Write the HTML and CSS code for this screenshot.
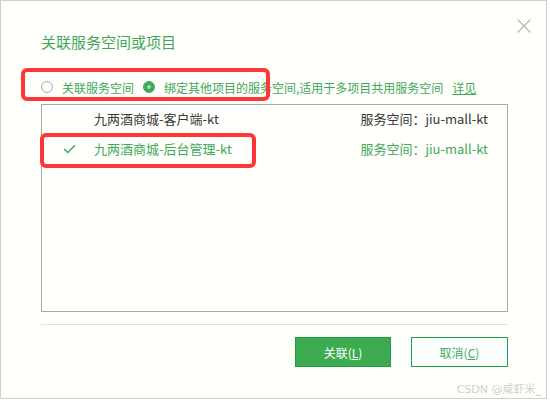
FILE: index.html
```html
<!DOCTYPE html>
<html lang="zh-CN">
<head>
<meta charset="utf-8">
<link rel="stylesheet" href="styles.css">
</head>
<body>
<div class="dialog">
  <button class="close" aria-label="关闭">
    <svg width="14" height="14" viewBox="0 0 14 14"><path d="M0.5 0.5 L13.5 13.5 M13.5 0.5 L0.5 13.5" stroke="#b5b5b5" stroke-width="1.1" fill="none"/></svg>
  </button>
  <h1 class="title">关联服务空间或项目</h1>
  <div class="radios">
    <label class="radio"><span class="dot"></span>关联服务空间</label>
    <label class="radio checked"><span class="dot"></span>绑定其他项目的服务空间,适用于多项目共用服务空间</label>
    <a class="link">详见</a>
  </div>
  <div class="list">
    <div class="row">
      <span class="check"></span>
      <span class="name">九两酒商城-客户端-kt</span>
      <span class="space">服务空间：jiu-mall-kt</span>
    </div>
    <div class="row selected">
      <span class="check"><svg width="13" height="10" viewBox="0 0 13 10"><path d="M1 5 L4.8 8.6 L12 1.2" stroke="#3fa85b" stroke-width="1.4" fill="none"/></svg></span>
      <span class="name">九两酒商城-后台管理-kt</span>
      <span class="space">服务空间：jiu-mall-kt</span>
    </div>
  </div>
  <div class="sep"></div>
  <div class="actions">
    <button class="btn primary">关联(<u>L</u>)</button>
    <button class="btn">取消(<u>C</u>)</button>
  </div>
  <div class="mark mark-radios"></div>
  <div class="mark mark-row"></div>
  <div class="watermark">CSDN @咸虾米_</div>
</div>
</body>
</html>
```
FILE: styles.css
```css
html, body {
  margin: 0;
  background: #ffffff;
}
body {
  font-family: "Microsoft YaHei", "Noto Sans CJK SC", "Noto Sans", sans-serif;
}
.dialog {
  position: relative;
  width: 547px;
  height: 399px;
  box-sizing: border-box;
  border: 1px solid #cfcfcf;
  background: #fffffb;
  padding: 31px 38px 0 40px;
  display: flex;
  flex-direction: column;
}
.close {
  position: absolute;
  top: 18px;
  right: 15px;
  width: 14px;
  height: 14px;
  padding: 0;
  border: 0;
  background: none;
  display: flex;
}
.title {
  margin: 0;
  font-size: 15px;
  line-height: 20px;
  font-weight: normal;
  color: #3fa85b;
}
.radios {
  margin-top: 25px;
  display: flex;
  align-items: center;
  height: 20px;
  font-size: 12px;
  color: #3fa85b;
}
.radio {
  display: flex;
  align-items: center;
  white-space: nowrap;
}
.radio + .radio {
  margin-left: 9px;
}
.dot {
  flex: none;
  width: 10px;
  height: 10px;
  border: 1px solid #a8a8a8;
  border-radius: 50%;
  margin-right: 9px;
  background: #fff;
}
.radio.checked .dot {
  background: #3fa85b;
  border-color: #3fa85b;
  box-shadow: inset 0 0 0 3px #3fa85b, inset 0 0 0 6px #a9dcb6;
}
.link {
  margin-left: 9px;
  text-decoration: underline;
  color: #3fa85b;
}
.list {
  margin-top: 7px;
  height: 208px;
  box-sizing: border-box;
  border: 1px solid #a9a9a9;
  display: flex;
  flex-direction: column;
}
.row {
  height: 30px;
  box-sizing: border-box;
  display: flex;
  align-items: center;
  padding: 0 19px 3px 21px;
  font-size: 13px;
  color: #383838;
}
.row.selected {
  color: #3fa85b;
}
.check {
  flex: none;
  width: 13px;
  height: 10px;
  display: flex;
}
.name {
  margin-left: 18px;
  flex: 1;
}
.space {
  white-space: nowrap;
}
.sep {
  margin-top: 12px;
  height: 1px;
  background: #e2e2e2;
}
.actions {
  margin-top: 12px;
  display: flex;
  justify-content: flex-end;
  gap: 20px;
}
.btn {
  width: 97px;
  height: 30px;
  box-sizing: border-box;
  border: 1px solid #1f9f48;
  background: #fbfffd;
  color: #3fa85b;
  font-family: inherit;
  font-size: 12px;
  padding: 0;
}
.btn.primary {
  width: 96px;
  background: #3dac50;
  color: #fff;
}
.btn u {
  text-decoration: underline;
}
.mark {
  position: absolute;
  border: 4px solid #ff3636;
  border-radius: 6px;
  box-sizing: border-box;
}
.mark-radios {
  left: 20px;
  top: 67px;
  width: 249px;
  height: 33px;
}
.mark-row {
  left: 39px;
  top: 132px;
  width: 216px;
  height: 35px;
}
.watermark {
  position: absolute;
  right: 5px;
  bottom: 2px;
  font-size: 11px;
  color: #cfcfcf;
  font-family: "DejaVu Sans", "Noto Sans CJK SC", sans-serif;
}
```
